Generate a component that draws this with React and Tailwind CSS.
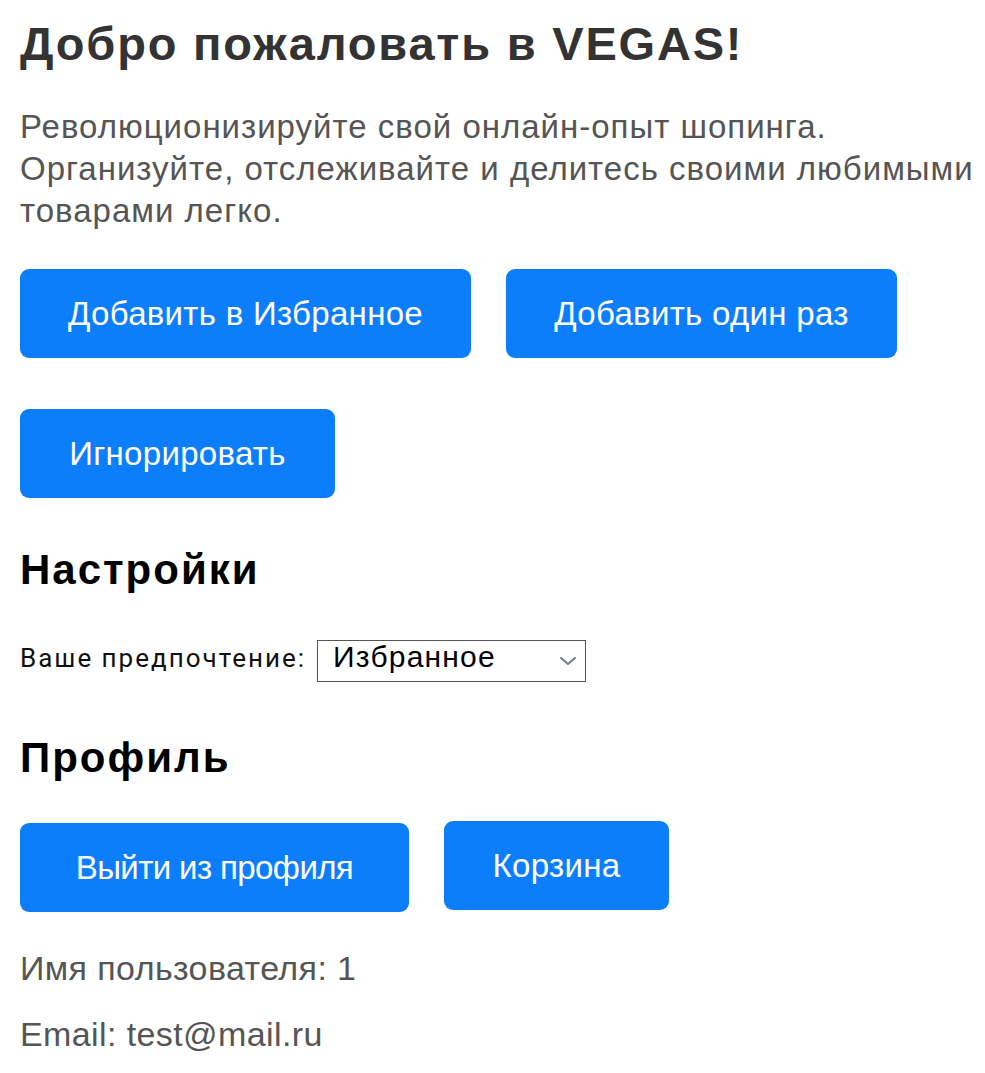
import React from 'react';

const Btn = ({ children, className = '' }) => (
  <button
    className={`h-[89px] rounded-[9px] bg-[#0c7efb] text-white text-[33px] leading-[40px] font-[family-name:'Liberation_Sans',Arial,sans-serif] ${className}`}
  >
    {children}
  </button>
);

export default function App() {
  return (
    <div className="min-h-screen bg-white pl-[20px] pr-[4px] pt-[17px] font-[family-name:'Liberation_Sans',Arial,sans-serif]">
      <h1 className="text-[47px] font-bold text-[#333] leading-[54px] tracking-[1.8px]">Добро пожаловать в VEGAS!</h1>

      <p className="mt-[35px] text-[33px] leading-[42px] text-[#555] tracking-[1px] whitespace-nowrap">
        Революционизируйте свой онлайн-опыт шопинга.
        <br />
        Организуйте, отслеживайте и делитесь своими любимыми
        <br />
        товарами легко.
      </p>

      <div className="mt-[37px] flex flex-wrap gap-x-[35px] gap-y-[51px]">
        <Btn className="w-[451px] tracking-[0.3px]">Добавить в Избранное</Btn>
        <Btn className="w-[391px] tracking-[0.3px]">Добавить один раз</Btn>
        <Btn className="w-[315px] tracking-[0.3px]">Игнорировать</Btn>
      </div>

      <h2 className="mt-[49px] text-[42px] font-bold text-black leading-[46px] tracking-[2px]">Настройки</h2>

      <div className="mt-[47px] flex items-start gap-[11px]">
        <span className="text-[26px] leading-[36px] text-[#111] font-[family-name:Roboto,sans-serif] tracking-[2px]">
          Ваше предпочтение:
        </span>
        <div className="relative w-[269px] h-[42px] border border-[#555] pl-[15px]">
          <span className="block text-[30px] leading-[32px] text-black tracking-[1.2px]">Избранное</span>
          <svg className="absolute right-[8px] top-[15px] w-[18px] h-[10px]" viewBox="0 0 18 10" fill="none">
            <path d="M2 2l7 6 7-6" stroke="#7a808a" strokeWidth="2.2" strokeLinecap="round" strokeLinejoin="round" />
          </svg>
        </div>
      </div>

      <h2 className="mt-[53px] text-[42px] font-bold text-black leading-[46px] tracking-[2px]">Профиль</h2>

      <div className="mt-[40px] flex items-start gap-x-[35px]">
        <Btn className="w-[389px] mt-[2px] tracking-[-0.6px]">Выйти из профиля</Btn>
        <Btn className="w-[225px] tracking-[0.3px]">Корзина</Btn>
      </div>

      <p className="mt-[36px] text-[34px] text-[#555] leading-[40px] tracking-[0.4px]">Имя пользователя: 1</p>
      <p className="mt-[26px] text-[34px] text-[#555] leading-[40px] tracking-[0.4px]">Email: test@mail.ru</p>
    </div>
  );
}
